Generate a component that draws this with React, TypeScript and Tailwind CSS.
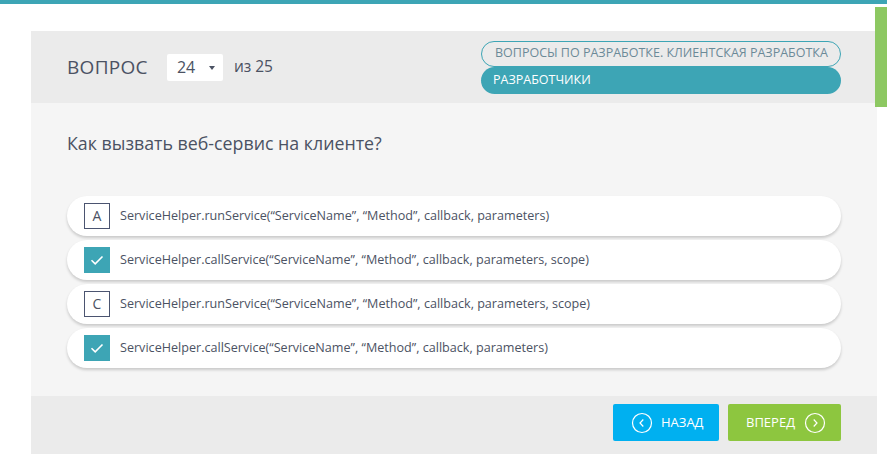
import React from "react";

function Check() {
  return (
    <svg width="26" height="26" viewBox="0 0 26 26">
      <path d="M7.5 13.2 L11.2 16.8 L18.5 9.5" fill="none" stroke="white" strokeWidth="1.6" />
    </svg>
  );
}

function CircleChevron({ dir }: { dir: "left" | "right" }) {
  return (
    <svg width="22" height="22" viewBox="0 0 22 22">
      <circle cx="11" cy="11" r="9.5" fill="none" stroke="white" strokeWidth="1.2" />
      {dir === "left" ? (
        <path d="M12.3 7.5 L9 11 L12.3 14.5" fill="none" stroke="white" strokeWidth="1.2" />
      ) : (
        <path d="M9.7 7.5 L13 11 L9.7 14.5" fill="none" stroke="white" strokeWidth="1.2" />
      )}
    </svg>
  );
}

const options = [
  { label: "A", checked: false, text: "ServiceHelper.runService(“ServiceName”, “Method”, callback, parameters)" },
  { label: "B", checked: true, text: "ServiceHelper.callService(“ServiceName”, “Method”, callback, parameters, scope)" },
  { label: "C", checked: false, text: "ServiceHelper.runService(“ServiceName”, “Method”, callback, parameters, scope)" },
  { label: "D", checked: true, text: "ServiceHelper.callService(“ServiceName”, “Method”, callback, parameters)" },
];

export default function App() {
  return (
    <div
      className="relative w-[887px] h-[454px] overflow-hidden bg-white text-[#4b5263]"
      style={{ fontFamily: '"Open Sans", "Noto Sans", sans-serif' }}
    >
      <div className="h-[4px] bg-[#3da5b5]" />
      <div className="absolute right-0 top-[7px] w-[12px] h-[100px] bg-[#8dc862]" />
      <div className="pt-[27px] pl-[31px]">
        <div className="w-[846px]">
          {/* header */}
          <div className="h-[72px] bg-[#ebebeb] flex items-center justify-between pl-[36px] pr-[36px]">
            <div className="flex items-center">
              <span className="text-[19px] leading-none tracking-[0.3px]">ВОПРОС</span>
              <div className="ml-[19px] w-[56px] h-[27px] bg-white rounded-[2px] flex items-center pl-[10px] relative">
                <span className="text-[16px] leading-none">24</span>
                <span className="absolute left-[42px] top-[12px] w-0 h-0 border-l-[3.5px] border-r-[3.5px] border-t-[4px] border-l-transparent border-r-transparent border-t-[#4b5263]" />
              </div>
              <span className="ml-[11px] text-[15.5px] leading-none">из 25</span>
            </div>
            <div className="flex flex-col w-[360px]">
              <div className="h-[26px] rounded-full border border-[#3da5b5] flex items-center pl-[13px] text-[12.5px] text-[#6b8a98] leading-none whitespace-nowrap">
                ВОПРОСЫ ПО РАЗРАБОТКЕ. КЛИЕНТСКАЯ РАЗРАБОТКА
              </div>
              <div className="h-[27px] rounded-full bg-[#3da5b5] flex items-center pl-[12px] text-[12.5px] text-white leading-none whitespace-nowrap">
                РАЗРАБОТЧИКИ
              </div>
            </div>
          </div>
          {/* body */}
          <div className="bg-[#f5f5f5] px-[36px] pt-[28px] pb-[28px]">
            <div className="text-[17.8px] leading-[25px]">Как вызвать веб-сервис на клиенте?</div>
            <div className="mt-[40px] flex flex-col gap-[4px]">
              {options.map((o, i) => (
                <div
                  key={i}
                  className="h-[40px] bg-white rounded-full shadow-[0_2px_3px_rgba(0,0,0,0.18)] flex items-center pl-[17px]"
                >
                  {o.checked ? (
                    <div className="w-[26px] h-[26px] bg-[#3da5b5] flex items-center justify-center">
                      <Check />
                    </div>
                  ) : (
                    <div className="w-[26px] h-[26px] border border-[#4b5470] flex items-center justify-center text-[14px] leading-none">
                      {o.label}
                    </div>
                  )}
                  <span className="ml-[10px] text-[12.6px] leading-none">{o.text}</span>
                </div>
              ))}
            </div>
          </div>
          {/* footer */}
          <div className="h-[70px] bg-[#ebebeb] flex justify-end items-start pt-[8px] pr-[36px] gap-[9px]">
            <button className="w-[106px] h-[37px] bg-[#00b0f0] rounded-[2px] flex items-center pl-[18px] text-white text-[13px]">
              <CircleChevron dir="left" />
              <span className="ml-[8px]">НАЗАД</span>
            </button>
            <button className="w-[113px] h-[37px] bg-[#8dc63f] rounded-[2px] flex items-center pl-[18px] text-white text-[13px]">
              <span>ВПЕРЕД</span>
              <span className="ml-[9px] flex"><CircleChevron dir="right" /></span>
            </button>
          </div>
        </div>
      </div>
    </div>
  );
}
